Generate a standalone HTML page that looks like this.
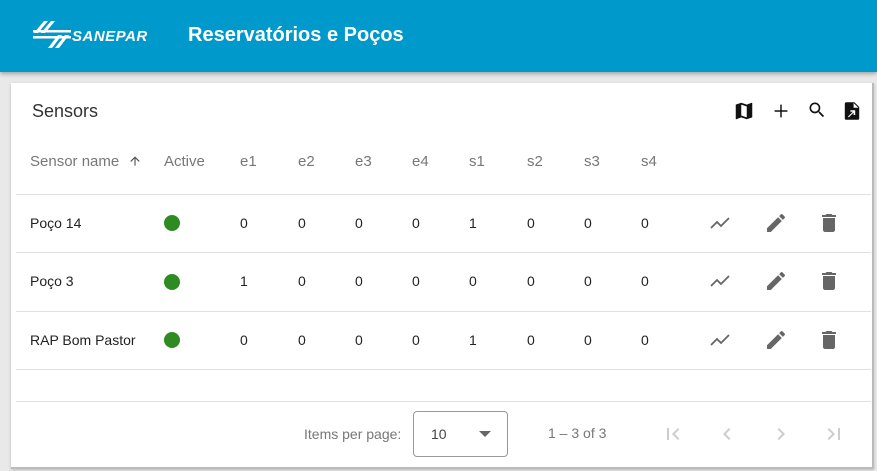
<!DOCTYPE html>
<html><head><meta charset="utf-8"><style>
*{margin:0;padding:0;box-sizing:border-box}
body{width:877px;height:471px;background:#e9e9e9;font-family:"Liberation Sans",sans-serif;position:relative;overflow:hidden}
.hdr{position:absolute;left:0;top:0;width:877px;height:72px;background:#0099cc;box-shadow:0 2px 4px rgba(0,0,0,.3)}
.title{position:absolute;left:188px;top:24px;color:#fff;font-size:20px;font-weight:bold}
.logotxt{position:absolute;left:72px;top:28px;color:#fff;font-size:15px;font-weight:bold;font-style:italic;letter-spacing:.5px}
.card{position:absolute;left:11px;top:83px;width:863px;height:386px;background:#fff;border-right:2px solid #bbb;border-bottom:2px solid #bbb;box-shadow:0 1px 3px rgba(0,0,0,.2)}
.t{position:absolute;font-size:14px;color:#222}
.h{position:absolute;font-size:15px;color:#777}
.line{position:absolute;left:16px;width:855px;height:1px;background:#e0e0e0}
.dot{position:absolute;width:16px;height:16px;border-radius:50%;background:#2e8b22}
svg{position:absolute}
</style></head><body>
<div class="hdr">
<svg width="40" height="30" viewBox="0 0 40 30" style="left:32px;top:21px">
<g fill="#fff"><polygon points="12,0 16,0 6,12 2,12"/><polygon points="19,0 23,0 13,12 9,12"/><rect x="1" y="9" width="38" height="2.5"/><rect x="1" y="15" width="38" height="2.5"/><polygon points="26,14 30,14 20,27 16,27"/><polygon points="33,14 37,14 27,27 23,27"/></g></svg>
<div class="logotxt">SANEPAR</div>
<div class="title">Reservatórios e Poços</div>
</div>
<div class="card"></div>
<div class="t" style="left:32px;top:101px;font-size:18px;color:#333">Sensors</div>
<svg width="22" height="22" viewBox="0 0 24 24" style="left:733px;top:100px"><path fill="#111" d="M20.5 3l-.16.03L15 5.1 9 3 3.36 4.9c-.21.07-.36.25-.36.48V20.5c0 .28.22.5.5.5l.16-.03L9 18.9l6 2.1 5.64-1.9c.21-.07.36-.25.36-.48V3.5c0-.28-.22-.5-.5-.5zM15 19l-6-2.11V5l6 2.11V19z"/></svg>
<svg width="22" height="22" viewBox="0 0 24 24" style="left:770px;top:100px"><path fill="#111" d="M19 12.8h-6.2V19h-1.6v-6.2H5v-1.6h6.2V5h1.6v6.2H19z"/></svg>
<svg width="20" height="20" viewBox="0 0 24 24" style="left:807px;top:100px"><path fill="#111" d="M15.5 14h-.79l-.28-.27A6.47 6.47 0 0016 9.5 6.5 6.5 0 109.5 16c1.61 0 3.09-.59 4.23-1.57l.27.28v.79l5 4.99L20.49 19l-4.99-5zm-6 0C7.01 14 5 11.99 5 9.5S7.01 5 9.5 5 14 7.01 14 9.5 11.99 14 9.5 14z"/></svg>
<svg width="16" height="20" viewBox="0 0 20 22" style="left:844px;top:101px"><path fill="#111" d="M3 0h10l6 6v14a2 2 0 01-2 2H3a2 2 0 01-2-2V2a2 2 0 012-2z"/><path fill="#fff" d="M12 1v6h6z"/><path fill="#fff" d="M5 18l6-6H8v-2h6v6h-2v-3l-6 6z"/></svg>
<div class="h" style="left:30px;top:153px">Sensor name</div>
<svg width="14" height="16" viewBox="0 0 24 24" style="left:128px;top:153px"><path fill="#555" d="M4 12l1.41 1.41L11 7.83V20h2V7.83l5.58 5.59L20 12l-8-8-8 8z"/></svg>
<div class="h" style="left:164px;top:153px">Active</div>
<div class="h" style="left:240px;top:153px">e1</div><div class="h" style="left:298px;top:153px">e2</div><div class="h" style="left:355px;top:153px">e3</div><div class="h" style="left:412px;top:153px">e4</div>
<div class="h" style="left:469px;top:153px">s1</div><div class="h" style="left:527px;top:153px">s2</div><div class="h" style="left:584px;top:153px">s3</div><div class="h" style="left:641px;top:153px">s4</div>
<div class="line" style="top:194px"></div><div class="line" style="top:252px"></div><div class="line" style="top:311px"></div><div class="line" style="top:369px"></div><div class="line" style="top:401px"></div>

<div class="t" style="left:30px;top:215px">Poço 14</div><div class="dot" style="left:164px;top:215px"></div>
<div class="t" style="left:240px;top:215px">0</div><div class="t" style="left:298px;top:215px">0</div><div class="t" style="left:355px;top:215px">0</div><div class="t" style="left:412px;top:215px">0</div><div class="t" style="left:469px;top:215px">1</div><div class="t" style="left:527px;top:215px">0</div><div class="t" style="left:584px;top:215px">0</div><div class="t" style="left:641px;top:215px">0</div>

<div class="t" style="left:30px;top:273px">Poço 3</div><div class="dot" style="left:164px;top:274px"></div>
<div class="t" style="left:240px;top:273px">1</div><div class="t" style="left:298px;top:273px">0</div><div class="t" style="left:355px;top:273px">0</div><div class="t" style="left:412px;top:273px">0</div><div class="t" style="left:469px;top:273px">0</div><div class="t" style="left:527px;top:273px">0</div><div class="t" style="left:584px;top:273px">0</div><div class="t" style="left:641px;top:273px">0</div>

<div class="t" style="left:30px;top:332px">RAP Bom Pastor</div><div class="dot" style="left:164px;top:332px"></div>
<div class="t" style="left:240px;top:332px">0</div><div class="t" style="left:298px;top:332px">0</div><div class="t" style="left:355px;top:332px">0</div><div class="t" style="left:412px;top:332px">0</div><div class="t" style="left:469px;top:332px">1</div><div class="t" style="left:527px;top:332px">0</div><div class="t" style="left:584px;top:332px">0</div><div class="t" style="left:641px;top:332px">0</div>

<svg width="0" height="0"><defs>
<g id="tr"><path fill="none" stroke="#666" stroke-width="1.8" d="M1 17l6-6 4 4 8-8"/></g>
<g id="ed"><path fill="#666" d="M3 17.25V21h3.75L17.81 9.94l-3.75-3.75L3 17.25zM20.71 7.04a1 1 0 000-1.41l-2.34-2.34a1 1 0 00-1.41 0l-1.83 1.83 3.75 3.75 1.83-1.83z"/></g>
<g id="dl"><path fill="#666" d="M6 19c0 1.1.9 2 2 2h8c1.1 0 2-.9 2-2V7H6v12zM19 4h-3.5l-1-1h-5l-1 1H5v2h14V4z"/></g>
</defs></svg>
<svg width="24" height="24" viewBox="0 0 24 24" style="left:710px;top:211px"><use href="#tr"/></svg>
<svg width="24" height="24" viewBox="0 0 24 24" style="left:764px;top:211px"><use href="#ed"/></svg>
<svg width="24" height="24" viewBox="0 0 24 24" style="left:817px;top:211px"><use href="#dl"/></svg>
<svg width="24" height="24" viewBox="0 0 24 24" style="left:710px;top:269px"><use href="#tr"/></svg>
<svg width="24" height="24" viewBox="0 0 24 24" style="left:764px;top:269px"><use href="#ed"/></svg>
<svg width="24" height="24" viewBox="0 0 24 24" style="left:817px;top:269px"><use href="#dl"/></svg>
<svg width="24" height="24" viewBox="0 0 24 24" style="left:710px;top:328px"><use href="#tr"/></svg>
<svg width="24" height="24" viewBox="0 0 24 24" style="left:764px;top:328px"><use href="#ed"/></svg>
<svg width="24" height="24" viewBox="0 0 24 24" style="left:817px;top:328px"><use href="#dl"/></svg>

<div class="h" style="left:304px;top:426px;font-size:14px">Items per page:</div>
<div style="position:absolute;left:413px;top:411px;width:95px;height:46px;border:1px solid #999;border-radius:4px"></div>
<div class="t" style="left:431px;top:426px;color:#444">10</div>
<svg width="12" height="6" viewBox="0 0 12 6" style="left:479px;top:431px"><path fill="#666" d="M0 0h12L6 6z"/></svg>
<div class="h" style="left:548px;top:425px;font-size:14px">1 – 3 of 3</div>
<svg width="24" height="24" viewBox="0 0 24 24" style="left:661px;top:422px"><path fill="#ccc" d="M18.41 16.59L13.82 12l4.59-4.59L17 6l-6 6 6 6zM6 6h2v12H6z"/></svg>
<svg width="24" height="24" viewBox="0 0 24 24" style="left:715px;top:422px"><path fill="#ccc" d="M15.41 7.41L14 6l-6 6 6 6 1.41-1.41L10.83 12z"/></svg>
<svg width="24" height="24" viewBox="0 0 24 24" style="left:769px;top:422px"><path fill="#ccc" d="M10 6L8.59 7.41 13.17 12l-4.58 4.59L10 18l6-6z"/></svg>
<svg width="24" height="24" viewBox="0 0 24 24" style="left:822px;top:422px"><path fill="#ccc" d="M5.59 7.41L10.18 12l-4.59 4.59L7 18l6-6-6-6zM16 6h2v12h-2z"/></svg>
</body></html>
